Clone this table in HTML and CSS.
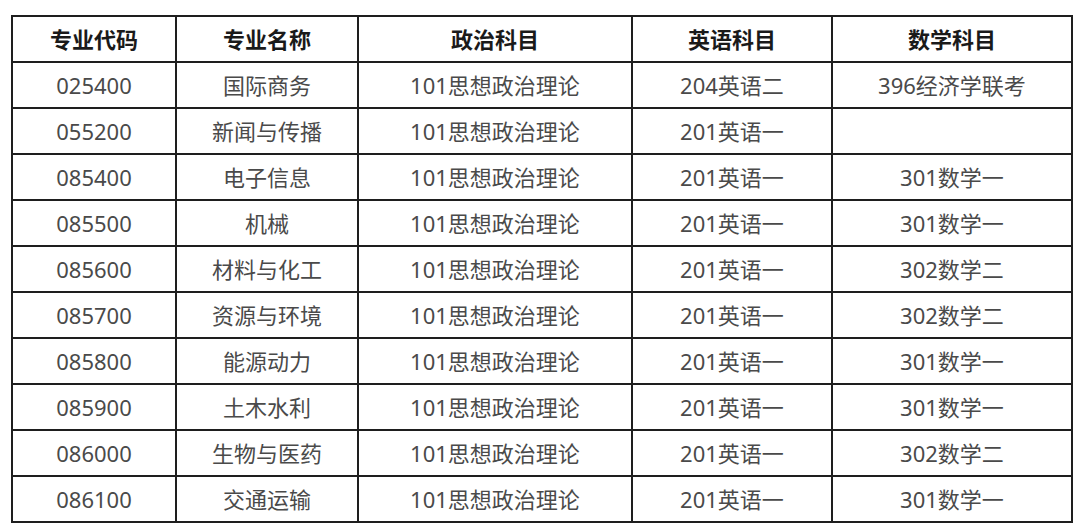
FILE: index.html
```html
<!DOCTYPE html>
<html lang="zh-CN">
<head>
<meta charset="utf-8">
<link rel="stylesheet" href="styles.css">
</head>
<body>
<table class="majors">
  <colgroup>
    <col class="c1"><col class="c2"><col class="c3"><col class="c4"><col class="c5">
  </colgroup>
  <thead>
    <tr><th>专业代码</th><th>专业名称</th><th>政治科目</th><th>英语科目</th><th>数学科目</th></tr>
  </thead>
  <tbody>
    <tr><td>025400</td><td>国际商务</td><td>101思想政治理论</td><td>204英语二</td><td>396经济学联考</td></tr>
    <tr><td>055200</td><td>新闻与传播</td><td>101思想政治理论</td><td>201英语一</td><td></td></tr>
    <tr><td>085400</td><td>电子信息</td><td>101思想政治理论</td><td>201英语一</td><td>301数学一</td></tr>
    <tr><td>085500</td><td>机械</td><td>101思想政治理论</td><td>201英语一</td><td>301数学一</td></tr>
    <tr><td>085600</td><td>材料与化工</td><td>101思想政治理论</td><td>201英语一</td><td>302数学二</td></tr>
    <tr><td>085700</td><td>资源与环境</td><td>101思想政治理论</td><td>201英语一</td><td>302数学二</td></tr>
    <tr><td>085800</td><td>能源动力</td><td>101思想政治理论</td><td>201英语一</td><td>301数学一</td></tr>
    <tr><td>085900</td><td>土木水利</td><td>101思想政治理论</td><td>201英语一</td><td>301数学一</td></tr>
    <tr><td>086000</td><td>生物与医药</td><td>101思想政治理论</td><td>201英语一</td><td>302数学二</td></tr>
    <tr><td>086100</td><td>交通运输</td><td>101思想政治理论</td><td>201英语一</td><td>301数学一</td></tr>
  </tbody>
</table>
</body>
</html>
```
FILE: styles.css
```css
html, body {
  margin: 0;
  padding: 0;
  background: #ffffff;
}
body {
  padding: 15px 0 0 11px;
  font-family: "Noto Sans", "Noto Sans CJK SC", sans-serif;
}
.majors {
  border-collapse: collapse;
  table-layout: fixed;
  width: 1062px;
  border: 2px solid #1e1e1e;
}
.c1 { width: 164px; }
.c2 { width: 182px; }
.c3 { width: 274px; }
.c4 { width: 200px; }
.c5 { width: 240px; }
.majors th,
.majors td {
  border: 2px solid #1e1e1e;
  height: 44px;
  padding: 0;
  text-align: center;
  vertical-align: middle;
  font-size: 22px;
  line-height: 44px;
  white-space: nowrap;
}
.majors th {
  font-weight: 700;
  color: #1a1a1a;
}
.majors td {
  font-weight: 400;
  color: #4a4a4a;
}
```
